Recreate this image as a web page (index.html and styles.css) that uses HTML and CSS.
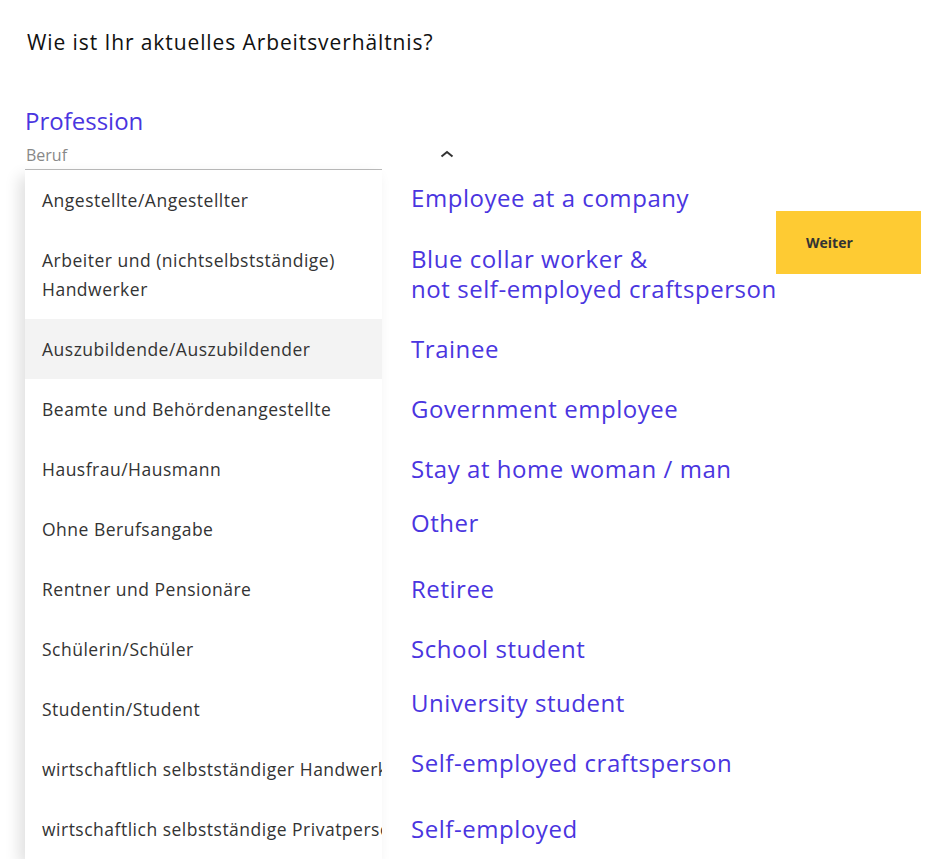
FILE: index.html
```html
<!DOCTYPE html>
<html lang="de">
<head>
    <meta charset="UTF-8">
    <title>Arbeitsverhältnis</title>
    <link rel="stylesheet" href="styles.css">
</head>
<body>
<div class="page">
    <h1 class="question">Wie ist Ihr aktuelles Arbeitsverhältnis?</h1>
    <div class="label">Profession</div>
    <div class="select">
        <span class="placeholder">Beruf</span>
        <svg class="chevron" width="14" height="8" viewBox="0 0 14 8"><polyline points="1.5,6.5 7,2 12.5,6.5" fill="none" stroke="#333" stroke-width="2"/></svg>
    </div>
    <div class="underline"></div>

    <div class="content">
        <ul class="menu">
            <li>Angestellte/Angestellter</li>
            <li class="tall">Arbeiter und (nichtselbstständige) Handwerker</li>
            <li class="current">Auszubildende/Auszubildender</li>
            <li>Beamte und Behördenangestellte</li>
            <li>Hausfrau/Hausmann</li>
            <li>Ohne Berufsangabe</li>
            <li>Rentner und Pensionäre</li>
            <li>Schülerin/Schüler</li>
            <li>Studentin/Student</li>
            <li>wirtschaftlich selbstständiger Handwerker</li>
            <li>wirtschaftlich selbstständige Privatperson</li>
        </ul>
        <ul class="notes">
            <li class="first">Employee at a company</li>
            <li class="tall">Blue collar worker &amp;<br>not self-employed craftsperson</li>
            <li>Trainee</li>
            <li>Government employee</li>
            <li>Stay at home woman / man</li>
            <li class="up">Other</li>
            <li>Retiree</li>
            <li>School student</li>
            <li class="up">University student</li>
            <li class="up">Self-employed craftsperson</li>
            <li>Self-employed</li>
        </ul>
        <button class="next">Weiter</button>
    </div>
</div>
</body>
</html>
```

FILE: styles.css
```css
body, div, ul, li, h1 {
    margin: 0;
    padding: 0;
}

ul {
    list-style-type: none;
}

body {
    background: #fff;
    font-family: "Open Sans", sans-serif;
    color: #222;
    height: 859px;
    overflow: hidden;
}

.page {
    padding-left: 25px;
}

.question {
    font-size: 21px;
    font-weight: 400;
    color: #111;
    line-height: 24px;
    letter-spacing: 0.9px;
    padding: 30px 0 0 2px;
}

.label {
    margin-top: 52px;
    font-size: 24px;
    line-height: 30px;
    color: #4a35e0;
}

.select {
    display: flex;
    align-items: center;
    justify-content: space-between;
    width: 429px;
    height: 24px;
    margin-top: 7px;
}

.placeholder {
    font-size: 16px;
    color: #888;
    padding-left: 1px;
}

.chevron {
    margin-top: -2px;
}

.underline {
    width: 357px;
    border-bottom: 1px solid #bbb;
    margin-top: 2px;
}

.content {
    display: flex;
    align-items: flex-start;
}

.menu {
    width: 357px;
    flex-shrink: 0;
    background: #fff;
    box-shadow: -6px 6px 14px rgba(0, 0, 0, 0.12);
}

.menu li {
    height: 60px;
    padding-left: 17px;
    display: flex;
    align-items: center;
    font-size: 17.5px;
    letter-spacing: 0.5px;
    color: #333;
    white-space: nowrap;
    overflow: hidden;
}

.menu li.tall {
    height: 89px;
    white-space: normal;
    line-height: 29px;
    padding-right: 10px;
}

.menu li.current {
    background: #f3f3f3;
}

.notes {
    width: 365px;
    flex-shrink: 0;
    margin-left: 29px;
    color: #4a35e0;
    font-size: 24px;
    letter-spacing: 0.55px;
    white-space: nowrap;
}

.notes li {
    height: 60px;
    line-height: 30px;
    display: flex;
    align-items: center;
}

.notes li.first {
    margin-top: -2px;
    margin-bottom: 1px;
}

.notes li.tall {
    height: 89px;
    margin-bottom: 1px;
}

.notes li.up {
    margin-top: -6px;
    margin-bottom: 6px;
}

.next {
    margin-top: 41px;
    width: 145px;
    height: 63px;
    border: 0;
    background: #fecb33;
    font-family: "Open Sans", sans-serif;
    font-weight: 700;
    font-size: 14px;
    color: #333;
    text-align: left;
    padding-left: 30px;
}
```
